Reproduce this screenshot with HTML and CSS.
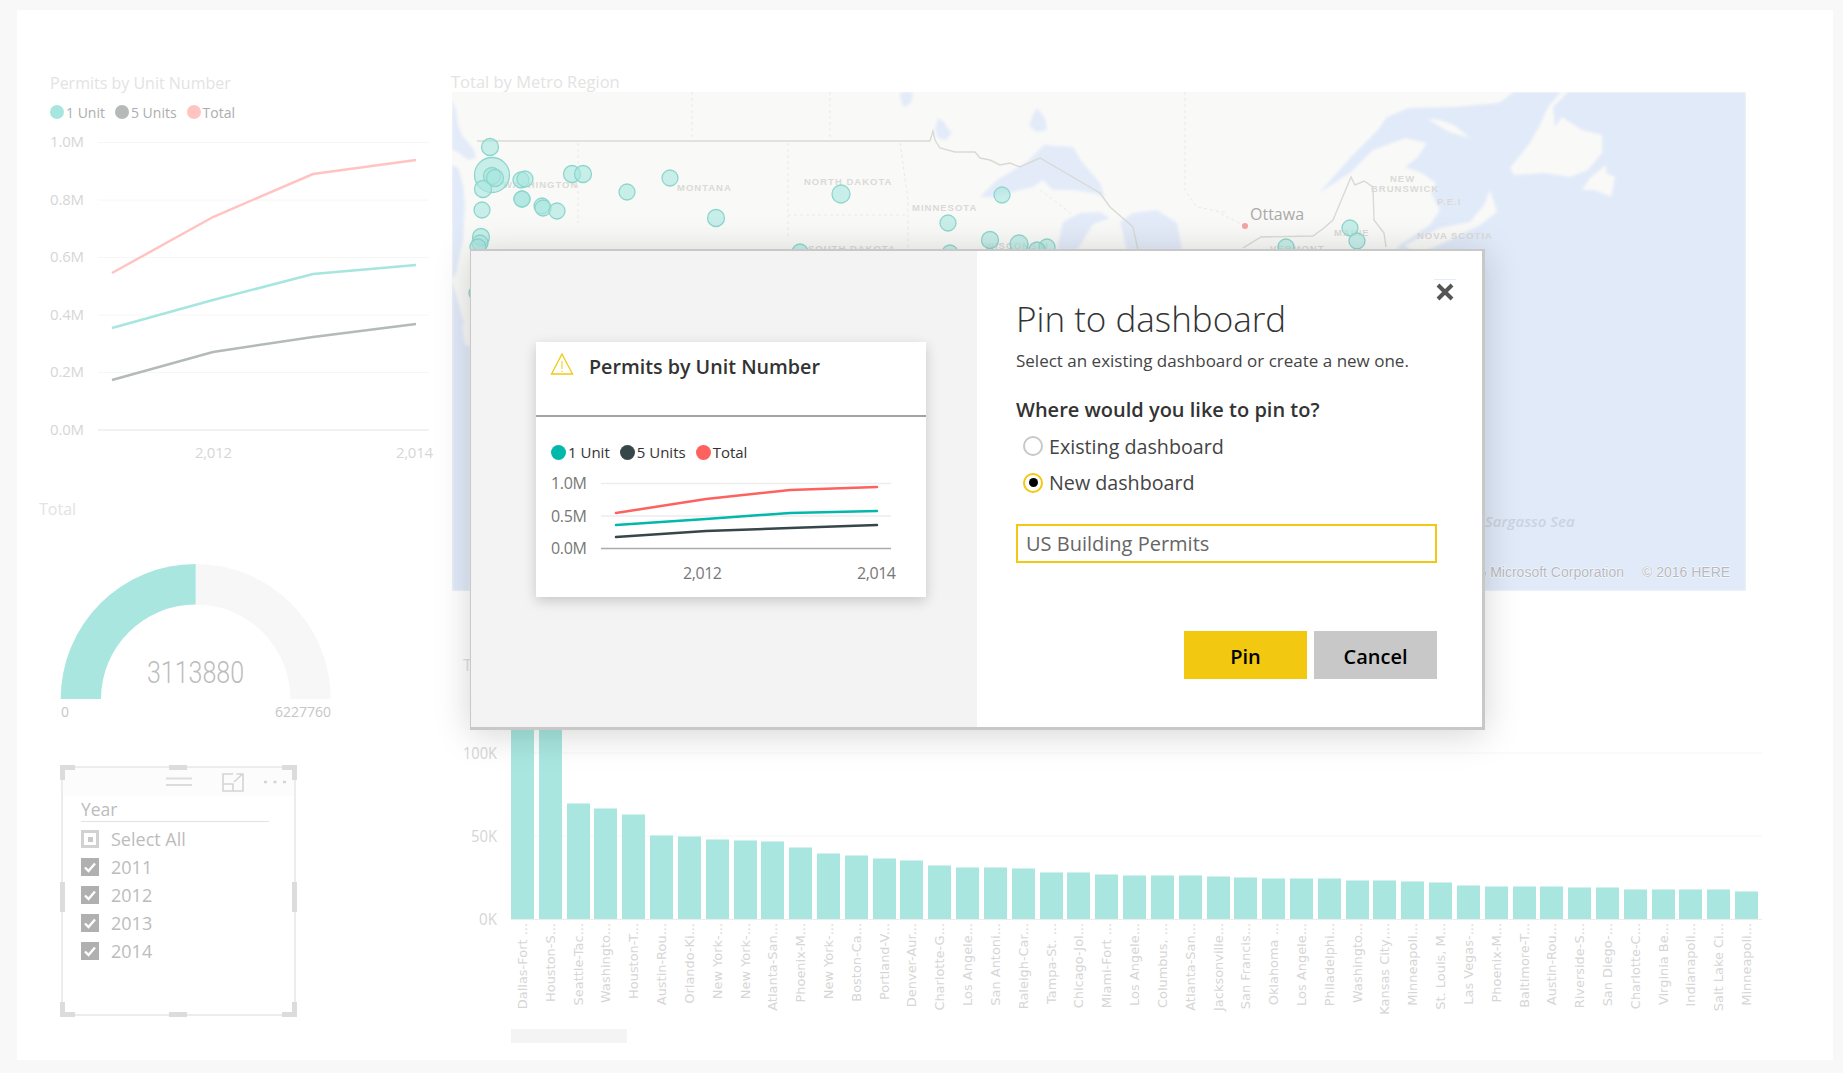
FILE: index.html
```html
<!DOCTYPE html>
<html>
<head>
    <title>Pin to dashboard</title>
    <link rel="stylesheet" href="styles.css">
</head>
<body>
    <div class="board">
        <div class="col-left">
            <div class="tile-line">
                <div class="tile-title">Permits by Unit Number</div>
                <div class="legend legend-faded">
                    <span class="dot dot-teal"></span><span>1 Unit</span>
                    <span class="dot dot-grey"></span><span>5 Units</span>
                    <span class="dot dot-pink"></span><span>Total</span>
                </div>
                <svg class="line-chart" width="400" height="332" viewBox="50 132 400 332">
                    <g class="grid">
                        <line x1="98" x2="429" y1="142.5" y2="142.5"/>
                        <line x1="98" x2="429" y1="200" y2="200"/>
                        <line x1="98" x2="429" y1="257.5" y2="257.5"/>
                        <line x1="98" x2="429" y1="315" y2="315"/>
                        <line x1="98" x2="429" y1="372.5" y2="372.5"/>
                        <line class="axis" x1="98" x2="429" y1="430" y2="430"/>
                    </g>
                    <polyline class="ln ln-pink" points="112,273 213,217 313,174 416,160"/>
                    <polyline class="ln ln-teal" points="112,328 213,300 313,274 416,265"/>
                    <polyline class="ln ln-grey" points="112,380 213,352 313,337 416,324"/>
                    <g class="axis-text">
                        <text x="50" y="147" textLength="34">1.0M</text>
                        <text x="50" y="205" textLength="34">0.8M</text>
                        <text x="50" y="262" textLength="34">0.6M</text>
                        <text x="50" y="320" textLength="34">0.4M</text>
                        <text x="50" y="377" textLength="34">0.2M</text>
                        <text x="50" y="435" textLength="34">0.0M</text>
                        <text x="195" y="458" textLength="37">2,012</text>
                        <text x="396" y="458" textLength="37">2,014</text>
                    </g>
                </svg>
            </div>

            <div class="tile-gauge">
                <div class="tile-title">Total</div>
                <svg class="gauge" width="300" height="165" viewBox="50 560 300 165">
                    <path class="gauge-rest" d="M195.7 564 A135 135 0 0 1 330.7 699 L290.4 699 A94.700 94.500 0 0 0 195.7 604.5 Z"/>
                    <path class="gauge-fill" d="M60.7 699 A135 135 0 0 1 195.7 564 L195.7 604.5 A94.700 94.500 0 0 0 101 699 Z"/>
                    <text class="gauge-value" x="147" y="683" textLength="97" lengthAdjust="spacingAndGlyphs">3113880</text>
                    <text class="gauge-range" x="61" y="717">0</text>
                    <text class="gauge-range" x="331" y="717" text-anchor="end">6227760</text>
                </svg>
            </div>

            <div class="slicer">
                <span class="handle h-tl"></span><span class="handle h-tr"></span>
                <span class="handle h-bl"></span><span class="handle h-br"></span>
                <span class="handle h-t"></span><span class="handle h-b"></span>
                <span class="handle h-l"></span><span class="handle h-r"></span>
                <div class="slicer-bar">
                    <svg width="26" height="10" viewBox="0 0 26 10"><path d="M0 1.5H26M0 8H26" stroke="#dcdcdc" stroke-width="2"/></svg>
                    <svg class="focus-icon" width="22" height="19" viewBox="0 0 22 19"><path d="M11 1H1V18H21V7M1 11H11V18M12 9L20 1.5M14.5 1H21V7" fill="none" stroke="#d4d4d4" stroke-width="1.6"/></svg>
                    <svg class="more-icon" width="24" height="4" viewBox="0 0 24 4"><path d="M1 2H4M10.500 2H13.500M20 2H23" stroke="#d4d4d4" stroke-width="2.500"/></svg>
                </div>
                <div class="slicer-head">Year</div>
                <ul class="slicer-list">
                    <li><span class="box box-some"><i></i></span>Select All</li>
                    <li><span class="box"><svg width="18" height="18" viewBox="0 0 18 18"><path d="M4 9.500L7.500 13L14 5.500" fill="none" stroke="#fff" stroke-width="2.400"/></svg></span>2011</li>
                    <li><span class="box"><svg width="18" height="18" viewBox="0 0 18 18"><path d="M4 9.500L7.500 13L14 5.500" fill="none" stroke="#fff" stroke-width="2.400"/></svg></span>2012</li>
                    <li><span class="box"><svg width="18" height="18" viewBox="0 0 18 18"><path d="M4 9.500L7.500 13L14 5.500" fill="none" stroke="#fff" stroke-width="2.400"/></svg></span>2013</li>
                    <li><span class="box"><svg width="18" height="18" viewBox="0 0 18 18"><path d="M4 9.500L7.500 13L14 5.500" fill="none" stroke="#fff" stroke-width="2.400"/></svg></span>2014</li>
                </ul>
            </div>
        </div>

        <div class="col-right">
            <div class="tile-title map-title">Total by Metro Region</div>
            <svg class="map" width="1294" height="499" viewBox="452 92 1294 499">
                <defs><filter id="soft"><feGaussianBlur stdDeviation="1.4"/></filter></defs>
                <rect class="land" x="452" y="92" width="1294" height="499"/>
                <g filter="url(#soft)">
                    <path class="water" d="M452 165L458 168L463 185L465 205L463 240L458 262L456 275L452 280ZM452 280L470 345L470 591L452 591Z"/>
                    <path class="land" d="M452 280L458 270L470 272L470 300L460 302ZM462 325L470 322L470 346L465 345Z"/>
                    <path class="lake" d="M452 100L456 110L458 125L462 135L474 150L476 158L468 160L458 152L452 150Z"/>
                    <path class="lake" d="M900 92H913L911 103L904 107L901 101Z"/>
                    <path class="lake" d="M938 118L944 122L949 130L952 133L946 140L938 138L935 130Z"/>
                    <path class="lake" d="M1037 108L1045 118L1047 130L1036 132L1029 125L1033 115Z"/>
                    <path class="lake" d="M980 197L997 180L1027 162L1044 145L1073 147L1082 162L1100 183L1105 197L1093 193L1073 190L1053 190L1043 180L1033 187L1020 190L993 197Z"/>
                    <path class="lake" d="M1057 250L1063 222L1080 213L1100 212L1110 218L1093 224L1077 250Z"/>
                    <path class="lake" d="M1120 222L1133 213L1157 210L1177 223L1182 250L1127 250Z"/>
                    <path class="water" d="M1514 92L1499 103L1454 107L1409 108L1387 117L1378 130L1351 157L1337 173L1319 193L1351 172L1373 150L1405 138L1427 143L1418 157L1405 167L1422 173L1436 183L1431 193L1440 210L1430 225L1400 245L1390 260L1390 591H1746V92Z"/>
                    <path class="land" d="M1561 92L1548 107L1541 123L1530 143L1510 168L1514 175L1544 173L1570 177L1588 170L1602 153L1602 135L1582 130L1562 117L1555 127L1553 107L1568 92Z"/>
                    <path class="land" d="M1590 178L1606 165L1606 173L1615 177L1611 197L1595 190L1582 190Z"/>
                    <path class="land" d="M1427 119L1440 120L1454 125L1470 138L1449 132Z"/>
                    <path class="land" d="M1405 245L1440 228L1470 222L1484 205L1490 190L1497 212L1480 225L1450 240L1415 256Z"/>
                </g>
                <g class="state-line">
                    <path d="M692 92V140M578 143V223M830 92V140M788 143V237M788 215H908M900 143L908 200V248M1185 92V190L1197 207L1227 213M1245 226L1217 212M1040 190L1073 215"/>
                </g>
                <g class="border-line">
                    <path d="M477 141H930L933 131L935 140L940 148L955 152L975 152L980 158L990 160L1000 165L1010 163L1020 167L1040 158L1100 193L1110 207L1133 227L1138 250"/>
                    <path d="M1243 248L1261 237L1313 236L1324 228L1333 220L1351 177L1355 185L1364 181L1373 187L1374 220L1384 233L1386 247"/>
                </g>
                <g class="map-label">
                    <text x="503" y="188">WASHINGTON</text>
                    <text x="677" y="191">MONTANA</text>
                    <text x="804" y="185">NORTH DAKOTA</text>
                    <text x="912" y="211">MINNESOTA</text>
                    <text x="808" y="252">SOUTH DAKOTA</text>
                    <text x="985" y="249">WISCONSIN</text>
                    <text x="1390" y="182">NEW</text>
                    <text x="1371" y="192">BRUNSWICK</text>
                    <text x="1437" y="205">P.E.I</text>
                    <text x="1417" y="239">NOVA SCOTIA</text>
                    <text x="1334" y="236">MAINE</text>
                    <text x="1270" y="252">VERMONT</text>
                </g>
                <circle class="city-dot" cx="1245" cy="226" r="3"/>
                <text class="city" x="1250" y="220">Ottawa</text>
                <g id="bubbles"></g>
                <text class="sea" x="1485" y="527">Sargasso Sea</text>
                <text class="credit" x="1624" y="577" text-anchor="end">© 2016 Microsoft Corporation</text>
                <text class="credit" x="1642" y="577">© 2016 HERE</text>
            </svg>
            <div class="tile-bars">
                <div class="tile-title bars-title">Total by Metro Region</div>
                <svg id="bars" class="bars" width="1312" height="380" viewBox="451 680 1312 380"></svg>
            </div>
        </div>
    </div>

    <div class="dialog">
        <div class="dialog-preview">
            <div class="preview-card">
                <div class="card-head">
                    <svg width="24" height="24" viewBox="0 0 24 24"><path d="M12 2L22.500 22H1.500Z" fill="none" stroke="#f2c811" stroke-width="1.300"/><path d="M12 9V17M12 18.500V20" stroke="#f2c811" stroke-width="1"/></svg>
                    <span>Permits by Unit Number</span>
                </div>
                <div class="legend legend-card">
                    <span class="dot dot-teal-on"></span><span>1 Unit</span>
                    <span class="dot dot-dark-on"></span><span>5 Units</span>
                    <span class="dot dot-red-on"></span><span>Total</span>
                </div>
                <svg class="card-chart" width="390" height="125" viewBox="536 472 390 125">
                    <g class="card-grid">
                        <line x1="601" x2="891" y1="483.500" y2="483.500"/>
                        <line x1="601" x2="891" y1="516" y2="516"/>
                        <line class="card-axis" x1="601" x2="891" y1="548.500" y2="548.500"/>
                    </g>
                    <polyline class="ln-on ln-red" points="616,513 706,499 790,490 877,487"/>
                    <polyline class="ln-on ln-green" points="616,525 706,519 790,513 877,511"/>
                    <polyline class="ln-on ln-dark" points="616,537 706,531 790,528 877,525"/>
                    <g class="card-text">
                        <text x="551" y="489" textLength="36">1.0M</text>
                        <text x="551" y="522" textLength="36">0.5M</text>
                        <text x="551" y="554" textLength="36">0.0M</text>
                        <text x="683" y="579" textLength="39">2,012</text>
                        <text x="857" y="579" textLength="39">2,014</text>
                    </g>
                </svg>
            </div>
        </div>
        <div class="dialog-form">
            <button class="close-btn"><svg width="18" height="18" viewBox="0 0 18 18"><path d="M2 2L16 16M16 2L2 16" stroke="#555" stroke-width="4"/></svg></button>
            <h2>Pin to dashboard</h2>
            <p class="sub">Select an existing dashboard or create a new one.</p>
            <p class="question">Where would you like to pin to?</p>
            <div class="radio-row"><span class="radio"></span>Existing dashboard</div>
            <div class="radio-row"><span class="radio radio-on"><i></i></span>New dashboard</div>
            <input class="name-input" type="text" value="US Building Permits">
            <div class="actions">
                <button class="btn btn-pin">Pin</button>
                <button class="btn btn-cancel">Cancel</button>
            </div>
        </div>
    </div>

    <script src="script.js"></script>
</body>
</html>
```

FILE: styles.css
```css
html, body {
    margin: 0;
    padding: 0;
    height: 100%;
    overflow: hidden;
}
body {
    background-color: #f8f8f8;
    font-family: "Open Sans", sans-serif;
    position: relative;
}
svg {
    display: block;
}

/* report page */
.board {
    display: flex;
    box-sizing: border-box;
    width: 1816px;
    height: 1050px;
    margin: 10px 0 0 17px;
    background-color: #fff;
}
.col-left {
    width: 434px;
    box-sizing: border-box;
    padding: 63px 0 0 33px;
}
.col-right {
    padding-top: 62px;
}
.tile-title {
    color: #e3e3e3;
    font-size: 16px;
    line-height: 20px;
    white-space: nowrap;
}
.legend {
    display: flex;
    align-items: center;
    font-size: 14px;
}
.legend-faded {
    margin-top: 10px;
    height: 18px;
    color: #adadad;
}
.legend-faded .dot {
    width: 14px;
    height: 14px;
    margin-right: 2px;
}
.legend-faded .dot + span {
    margin-right: 10px;
}
.dot {
    border-radius: 50%;
    display: inline-block;
}
.dot-teal { background-color: #a6e6df; }
.dot-grey { background-color: #b4b9b9; }
.dot-pink { background-color: #ffc4c2; }
.line-chart {
    margin-top: 11px;
}
.grid line {
    stroke: #f6f6f6;
    stroke-width: 1;
}
.grid .axis {
    stroke: #e4e4e4;
}
.ln {
    fill: none;
    stroke-width: 2.500;
}
.ln-pink { stroke: #ffc4c2; }
.ln-teal { stroke: #a6e6df; }
.ln-grey { stroke: #b4b9b9; }
.axis-text text {
    fill: #d6d6d6;
    font-size: 15px;
}

.tile-gauge {
    margin: 35px 0 0 -11px;
}
.gauge {
    margin: 41px 0 0 11px;
}
.gauge-fill { fill: #a8e6df; }
.gauge-rest { fill: #f7f7f7; }
.gauge-value {
    fill: #bcbcbc;
    font-family: Roboto, sans-serif;
    font-weight: 300;
    font-size: 31px;
}
.gauge-range {
    fill: #c6c6c6;
    font-size: 14px;
}

/* year slicer */
.slicer {
    position: relative;
    box-sizing: border-box;
    width: 235px;
    height: 250px;
    margin: 41px 0 0 11px;
    border: 2px solid #ececec;
    color: #bcbcbc;
}
.handle {
    position: absolute;
    background-color: #dcdcdc;
}
.h-t, .h-b {
    left: 106px;
    width: 18px;
    height: 5px;
}
.h-t { top: -3px; }
.h-b { bottom: -3px; }
.h-l, .h-r {
    top: 114px;
    width: 5px;
    height: 30px;
}
.h-l { left: -3px; }
.h-r { right: -3px; }
.h-tl, .h-tr, .h-bl, .h-br {
    width: 10px;
    height: 10px;
    background-color: transparent;
    border: 0 solid #dcdcdc;
}
.h-tl { top: -3px; left: -3px; border-width: 5px 0 0 5px; }
.h-tr { top: -3px; right: -3px; border-width: 5px 5px 0 0; }
.h-bl { bottom: -3px; left: -3px; border-width: 0 0 5px 5px; }
.h-br { bottom: -3px; right: -3px; border-width: 0 5px 5px 0; }
.slicer-bar {
    display: flex;
    align-items: center;
    height: 28px;
    padding-left: 103px;
    background-color: #fcfcfc;
}
.focus-icon {
    margin-left: 30px;
}
.more-icon {
    margin-left: 19px;
}
.slicer-head {
    margin: 0 25px 0 18px;
    height: 25px;
    line-height: 27px;
    font-size: 17.500px;
    border-bottom: 1.500px solid #e2e2e2;
}
.slicer-list {
    list-style: none;
    margin: 3px 0 0 18px;
    padding: 0;
}
.slicer-list li {
    display: flex;
    align-items: center;
    height: 28px;
    font-size: 18px;
}
.box {
    display: flex;
    align-items: center;
    justify-content: center;
    width: 18px;
    height: 18px;
    margin-right: 12px;
    background-color: #b0b0b0;
}
.box-some {
    box-sizing: border-box;
    border: 3px solid #d2d2d2;
    background-color: #fff;
}
.box-some i {
    width: 5px;
    height: 5px;
    background-color: #cacaca;
}

/* map */
.map-title {
    font-size: 16.500px;
}
.map {
    margin-left: 1px;
}
.land { fill: #f9f9f7; }
.water { fill: #e1eaf9; }
.lake { fill: #e3ebf9; }
.state-line path {
    fill: none;
    stroke: #e9e9e7;
    stroke-dasharray: 3 3;
}
.border-line path {
    fill: none;
    stroke: #d9d9d6;
    stroke-width: 1.400;
}
.map-label text {
    fill: #dbd9d8;
    font-family: "Liberation Sans", sans-serif;
    font-weight: 700;
    font-size: 9.500px;
    letter-spacing: 1px;
}
.city-dot { fill: #f5a3a3; }
.city {
    fill: #a9a9a9;
    font-size: 16px;
}
.bubble {
    fill: #a6e6df;
    fill-opacity: 0.6;
    stroke: #8ed6cd;
    stroke-width: 1.300;
}
.sea {
    fill: #ccd3e0;
    font-size: 15px;
    font-style: italic;
    font-weight: 600;
}
.credit {
    fill: #b7b9be;
    font-family: "Liberation Sans", sans-serif;
    font-size: 14px;
    paint-order: stroke;
    stroke: #fff;
    stroke-width: 0.800px;
}

/* bars */
.tile-bars {
    margin-top: 64px;
}
.bars-title {
    margin-left: 12px;
    color: #e0e0e0;
}
.bars {
    margin-top: 5px;
}
.bar { fill: #a8e6df; }
.bar-grid {
    stroke: #f6f6f6;
}
.bar-axis {
    stroke: #ececec;
}
.bar-tick {
    fill: #d6d6d6;
    font-size: 16px;
}
.bar-name {
    fill: #d6d6d6;
    font-family: "DejaVu Sans", sans-serif;
    font-size: 12px;
}
.scroll-thumb { fill: #f4f4f4; }

/* dialog */
.dialog {
    position: absolute;
    left: 470px;
    top: 249px;
    display: flex;
    box-sizing: border-box;
    width: 1015px;
    height: 481px;
    background-color: #fff;
    border: 1px solid #c8c8c8;
    border-width: 2px 3px 3px 1px;
    box-shadow: 0 4px 34px rgba(0, 0, 0, 0.17);
}
.dialog-preview {
    width: 506px;
    box-sizing: border-box;
    padding: 91px 0 0 65px;
    background-color: #f3f3f3;
}
.preview-card {
    width: 390px;
    height: 255px;
    background-color: #fff;
    box-shadow: 0 4px 12px rgba(0, 0, 0, 0.18);
}
.card-head {
    display: flex;
    align-items: flex-start;
    box-sizing: border-box;
    height: 75px;
    padding: 10px 0 0 14px;
    border-bottom: 2px solid #a3a3a3;
    color: #333;
    font-size: 19.700px;
    font-weight: 600;
}
.card-head span {
    margin: 1px 0 0 15px;
    line-height: 28px;
}
.legend-card {
    margin: 25px 0 0 15px;
    height: 20px;
    color: #333;
    font-size: 15px;
}
.legend-card .dot {
    width: 15px;
    height: 15px;
    margin-right: 2px;
}
.legend-card .dot + span {
    margin-right: 10px;
}
.dot-teal-on { background-color: #01b8aa; }
.dot-dark-on { background-color: #374649; }
.dot-red-on { background-color: #fd625e; }
.card-chart {
    margin-top: 10px;
}
.card-grid line {
    stroke: #ededed;
    stroke-width: 1.500;
}
.card-grid .card-axis {
    stroke: #aaa;
}
.ln-on {
    fill: none;
    stroke-width: 2.500;
    stroke-linecap: round;
}
.ln-red { stroke: #fd625e; }
.ln-green { stroke: #01b8aa; }
.ln-dark { stroke: #374649; }
.card-text text {
    fill: #777;
    font-size: 16px;
}

.dialog-form {
    position: relative;
    flex: 1;
    padding: 46px 0 0 39px;
    color: #444;
}
.close-btn {
    position: absolute;
    left: 457px;
    top: 28px;
    width: 22px;
    height: 24px;
    padding: 3px 2px;
    background: none;
    border: none;
    border-top: 1px solid #e3edf7;
}
.dialog-form h2 {
    margin: 0;
    color: #333;
    font-size: 35px;
    font-weight: 300;
    line-height: 44px;
}
.sub {
    margin: 8px 0 0;
    font-size: 17px;
    line-height: 24px;
}
.question {
    margin: 24px 0 0;
    color: #333;
    font-size: 20px;
    font-weight: 600;
    line-height: 26px;
}
.radio-row {
    display: flex;
    align-items: center;
    height: 36.500px;
    padding-left: 7px;
    font-size: 19.700px;
}
.radio-row:nth-of-type(1) {
    margin-top: 5px;
}
.radio {
    display: flex;
    align-items: center;
    justify-content: center;
    box-sizing: border-box;
    width: 20px;
    height: 20px;
    margin-right: 6px;
    border: 2.500px solid #c8c8c8;
    border-radius: 50%;
}
.radio-on {
    border-color: #f2c811;
}
.radio-on i {
    width: 9px;
    height: 9px;
    border-radius: 50%;
    background-color: #000;
}
.name-input {
    display: block;
    box-sizing: border-box;
    width: 421px;
    height: 39px;
    margin-top: 23px;
    padding: 0 8px;
    border: 2px solid #f2c811;
    outline: none;
    color: #666;
    font-family: "Open Sans", sans-serif;
    font-size: 20px;
}
.actions {
    display: flex;
    justify-content: flex-end;
    gap: 7px;
    width: 421px;
    margin-top: 68px;
}
.btn {
    width: 123px;
    height: 48px;
    padding-top: 3px;
    border: none;
    color: #000;
    font-family: "Open Sans", sans-serif;
    font-size: 20px;
    font-weight: 600;
}
.btn-pin { background-color: #f2c811; }
.btn-cancel { background-color: #c8c8c8; }
```

FILE: script.js
```js
var SVG_NS = "http://www.w3.org/2000/svg";

function make(parent, tag, attrs, text) {
    var el = document.createElementNS(SVG_NS, tag);
    for (var key in attrs) {
        el.setAttribute(key, attrs[key]);
    }
    if (text) {
        el.textContent = text;
    }
    parent.appendChild(el);
    return el;
}

// x, y, r in page pixels, the map's viewBox uses the same numbers
var bubbles = [
    [492, 175, 17.5], [490, 147, 8.5], [492, 176, 8.5], [495, 178, 8.5], [483, 189, 8.5],
    [521, 180, 8], [525, 179, 8], [572, 174, 8.5], [583, 174, 8.5], [482, 210, 8],
    [522, 199, 8], [522, 199, 8], [542, 206, 8], [543, 208, 8], [557, 211, 8],
    [627, 192, 8], [670, 178, 8], [716, 218, 8.5], [481, 237, 8.5], [480, 243, 8],
    [478, 247, 8], [841, 194, 9], [1002, 195, 8], [948, 223, 8], [990, 240, 8.5],
    [1019, 244, 9], [1047, 247, 8], [1037, 250, 8], [950, 253, 8], [800, 252, 8],
    [1350, 228, 8], [1357, 241, 8], [1286, 247, 8], [477, 293, 8]
];
var bubbleGroup = document.getElementById("bubbles");
bubbles.forEach(function(b) {
    make(bubbleGroup, "circle", { "class": "bubble", cx: b[0], cy: b[1], r: b[2] });
});

// metro regions, sorted by total. The first two run up behind the dialog.
var metros = [
    ["Dallas-Fort ...", 260], ["Houston-S...", 260], ["Seattle-Tac...", 116], ["Washingto...", 111],
    ["Houston-T...", 105], ["Austin-Rou...", 84], ["Orlando-Ki...", 83], ["New York-...", 80],
    ["New York-...", 79], ["Atlanta-San...", 78], ["Phoenix-M...", 72], ["New York-...", 66],
    ["Boston-Ca...", 64], ["Portland-V...", 61], ["Denver-Aur...", 59], ["Charlotte-G...", 54],
    ["Los Angele...", 52], ["San Antoni...", 52], ["Raleigh-Car...", 51], ["Tampa-St. ...", 47],
    ["Chicago-Jol...", 47], ["Miami-Fort ...", 45], ["Los Angele...", 44], ["Columbus, ...", 44],
    ["Atlanta-San...", 44], ["Jacksonville...", 43], ["San Francis...", 42], ["Oklahoma ...", 41],
    ["Los Angele...", 41], ["Philadelphi...", 41], ["Washingto...", 39], ["Kansas City,...", 39],
    ["Minneapoli...", 38], ["St. Louis, M...", 37], ["Las Vegas-...", 34], ["Phoenix-M...", 33],
    ["Baltimore-T...", 33], ["Austin-Rou...", 33], ["Riverside-S...", 32], ["San Diego-...", 32],
    ["Charlotte-C...", 30], ["Virginia Be...", 30], ["Indianapoli...", 30], ["Salt Lake Ci...", 30],
    ["Minneapoli...", 28]
];

var chart = document.getElementById("bars");
var baseY = 919.5;

[753, 836].forEach(function(y) {
    make(chart, "line", { "class": "bar-grid", x1: 511, x2: 1762, y1: y, y2: y });
});

metros.forEach(function(m, i) {
    var x = Math.round(511 + i * 27.82);
    make(chart, "rect", { "class": "bar", x: x, y: baseY - m[1], width: 23, height: m[1] });
    make(chart, "text", {
        "class": "bar-name",
        "text-anchor": "end",
        transform: "translate(" + (x + 16) + " 923) rotate(-90) scale(1.08 1)"
    }, m[0]);
});

make(chart, "line", { "class": "bar-axis", x1: 511, x2: 1762, y1: baseY, y2: baseY });

[["100K", 463, 759, 34], ["50K", 471, 842, 26], ["0K", 479, 925, 18]].forEach(function(t) {
    make(chart, "text", {
        "class": "bar-tick", x: t[1], y: t[2],
        textLength: t[3], lengthAdjust: "spacingAndGlyphs"
    }, t[0]);
});

make(chart, "rect", { "class": "scroll-thumb", x: 511, y: 1029, width: 116, height: 14 });
```
